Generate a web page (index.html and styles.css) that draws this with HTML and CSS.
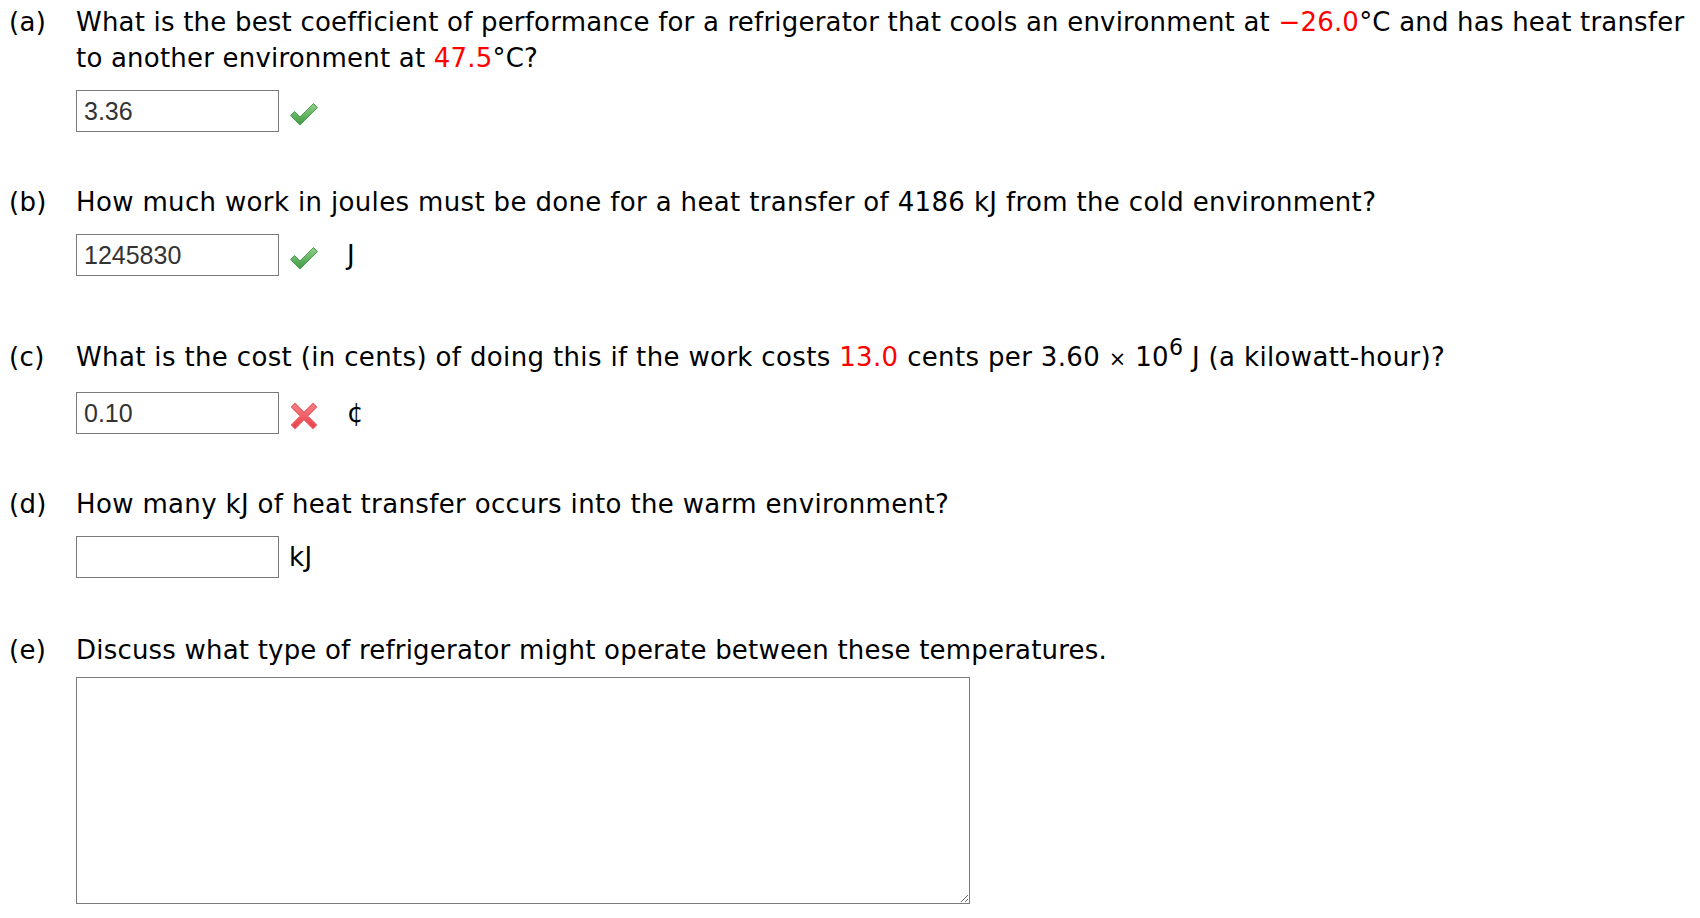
FILE: index.html
```html
<!DOCTYPE html>
<html>
<head>
<meta charset="utf-8">
<link rel="stylesheet" href="styles.css">
</head>
<body>
<div class="sheet">
  <div class="question q-a">
    <div class="label">(a)</div>
    <div class="body">
      <div class="prompt prompt-long">What is the best coefficient of performance for a refrigerator that cools an environment at <span class="num">&minus;26.0</span>&deg;C and has heat transfer to another environment at <span class="num">47.5</span>&deg;C?</div>
      <div class="answer">
        <input class="field" type="text" value="3.36">
        <span class="mark"><svg class="ok" viewBox="0 0 30 26" width="30" height="26"><defs><linearGradient id="g1" x1="0" y1="0" x2="0" y2="1"><stop offset="0" stop-color="#8fd08a"/><stop offset="1" stop-color="#3f9a43"/></linearGradient></defs><path d="M1.5 14.5 L5.5 10.5 L11 16 L24.5 2.5 L28.5 6.5 L11 24 Z" fill="url(#g1)" stroke="#4a9e4c" stroke-width="1" stroke-linejoin="round"/></svg></span>
      </div>
    </div>
  </div>

  <div class="question">
    <div class="label">(b)</div>
    <div class="body">
      <div class="prompt">How much work in joules must be done for a heat transfer of 4186 kJ from the cold environment?</div>
      <div class="answer">
        <input class="field" type="text" value="1245830">
        <span class="mark"><svg class="ok" viewBox="0 0 30 26" width="30" height="26"><defs><linearGradient id="g2" x1="0" y1="0" x2="0" y2="1"><stop offset="0" stop-color="#8fd08a"/><stop offset="1" stop-color="#3f9a43"/></linearGradient></defs><path d="M1.5 14.5 L5.5 10.5 L11 16 L24.5 2.5 L28.5 6.5 L11 24 Z" fill="url(#g2)" stroke="#4a9e4c" stroke-width="1" stroke-linejoin="round"/></svg></span>
        <span class="unit unit-after-mark">J</span>
      </div>
    </div>
  </div>

  <div class="question">
    <div class="label label-tall">(c)</div>
    <div class="body">
      <div class="prompt prompt-tall">What is the cost (in cents) of doing this if the work costs <span class="num">13.0</span> cents per 3.60 <span class="times">&times;</span> 10<sup>6</sup> J (a kilowatt-hour)?</div>
      <div class="answer">
        <input class="field" type="text" value="0.10">
        <span class="mark"><svg class="bad" viewBox="0 0 28 28" width="28" height="28"><defs><linearGradient id="g3" x1="0" y1="0" x2="0" y2="1"><stop offset="0" stop-color="#f7858b"/><stop offset="1" stop-color="#e83c46"/></linearGradient></defs><path d="M5 1.5 L14 10.5 L23 1.5 L26.5 5 L17.5 14 L26.5 23 L23 26.5 L14 17.5 L5 26.5 L1.5 23 L10.5 14 L1.5 5 Z" fill="url(#g3)" stroke="#ec5a62" stroke-width="1.2" stroke-linejoin="round"/></svg></span>
        <span class="unit unit-after-mark">&cent;</span>
      </div>
    </div>
  </div>

  <div class="question">
    <div class="label">(d)</div>
    <div class="body">
      <div class="prompt">How many kJ of heat transfer occurs into the warm environment?</div>
      <div class="answer">
        <input class="field" type="text" value="">
        <span class="unit">kJ</span>
      </div>
    </div>
  </div>

  <div class="question q-e">
    <div class="label">(e)</div>
    <div class="body">
      <div class="prompt prompt-e">Discuss what type of refrigerator might operate between these temperatures.</div>
      <div class="essay-row">
        <textarea class="essay"></textarea>
      </div>
    </div>
  </div>
</div>
</body>
</html>
```

FILE: styles.css
```css
html, body {
  margin: 0;
  padding: 0;
  background: #ffffff;
}

body {
  font-family: "DejaVu Sans", Verdana, sans-serif;
  font-size: 26px;
  letter-spacing: 0.35px;
  color: #000000;
}

.sheet {
  padding: 4px 4px 0 8px;
  display: flex;
  flex-direction: column;
  gap: 52px;
}

.question {
  display: flex;
  align-items: flex-start;
}

.q-e {
  margin-top: 2px;
}

.label {
  width: 68px;
  flex: 0 0 68px;
  padding-left: 1px;
  box-sizing: border-box;
  line-height: 36px;
}

.label-tall {
  padding-top: 11px;
}

.body {
  flex: 1 1 auto;
  min-width: 0;
}

.prompt {
  line-height: 36px;
}

.prompt-long {
  letter-spacing: 0.2px;
}

.prompt-e {
  letter-spacing: 0.2px;
}

.prompt-tall {
  padding: 11px 0 1px 0;
}

.num {
  color: #ff0000;
}

.times {
  font-size: 0.8em;
}

sup {
  font-size: 0.85em;
  line-height: 0;
  vertical-align: 0.5em;
}

.answer {
  display: flex;
  align-items: center;
  margin-top: 14px;
}

.field {
  width: 203px;
  height: 42px;
  box-sizing: border-box;
  margin: 0;
  padding: 0 7px;
  border: 1px solid #7a7a7a;
  border-radius: 0;
  font-family: "Liberation Sans", Arial, sans-serif;
  font-size: 25px;
  letter-spacing: 0;
  color: #333333;
  background: #ffffff;
  outline: none;
}

.mark {
  display: flex;
  align-items: center;
  justify-content: center;
  width: 30px;
  height: 30px;
  margin-left: 10px;
  margin-top: 5px;
}

.unit {
  margin-left: 10px;
  line-height: 36px;
}

.unit-after-mark {
  margin-left: 28px;
}

.essay-row {
  margin-top: 9px;
  display: flex;
}

.essay {
  width: 894px;
  height: 227px;
  box-sizing: border-box;
  margin: 0;
  border: 1px solid #7a7a7a;
  border-radius: 0;
  font-family: "Liberation Sans", Arial, sans-serif;
  font-size: 23px;
  padding: 4px 7px;
  outline: none;
}
```
